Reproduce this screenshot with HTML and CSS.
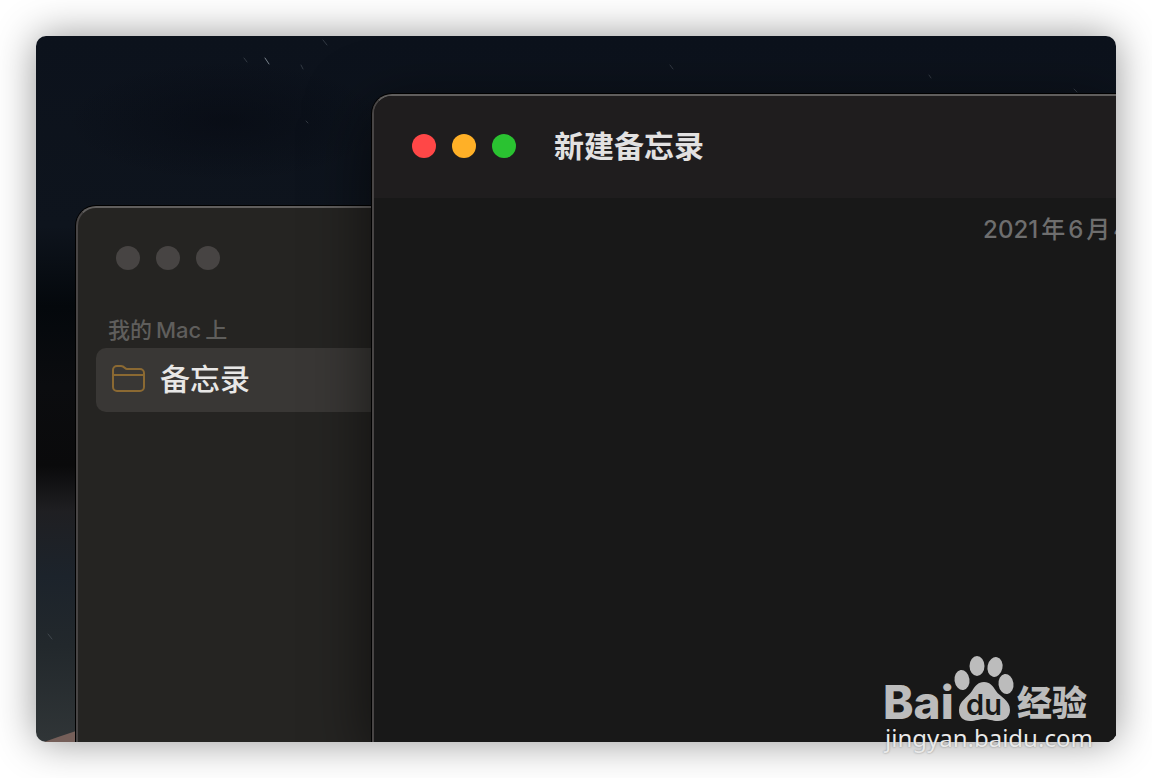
FILE: index.html
```
<!DOCTYPE html>
<html lang="zh-CN">

<head>
  <meta charset="UTF-8" />
  <meta name="viewport" content="width=device-width, initial-scale=1.0" />
  <title>新建备忘录</title>
  <link rel="stylesheet" href="styles.css">
</head>

<body>
  <main class="page">
    <div class="desktop">
      <!-- 星空壁纸 -->
      <svg class="stars" width="1080" height="706" fill="none" stroke="#7a838c" stroke-linecap="round" aria-hidden="true">
        <path d="M229 22l4 6" />
        <path d="M287 4l4 5M208 22l3 4M265 29l2 4M634 29l3 4M1038 53l3 3M893 39l2 3M270 85l2 2M12 598l4 5" opacity=".35" />
        <path d="M8 706L22 701L40 695V706Z" fill="#755f59" stroke="none" />
      </svg>

      <!-- 备忘录列表窗口 -->
      <section class="window window-list">
        <header class="list-header">
          <div class="lights inactive">
            <button type="button" aria-label="关闭"></button>
            <button type="button" aria-label="最小化"></button>
            <button type="button" aria-label="缩放"></button>
          </div>
        </header>
        <nav class="sidebar">
          <h2><span>我的</span><span>Mac</span><span>上</span></h2>
          <a class="folder" href="#">
            <svg width="34" height="28" viewBox="0 0 34 28" fill="none" stroke="#8b6932" stroke-width="2" stroke-linejoin="round" aria-hidden="true">
              <path d="M1 5a4 4 0 0 1 4-4h4c2 0 3 1 4 2s1 1 2 1h13a4 4 0 0 1 4 4v14a4 4 0 0 1-4 4H5a4 4 0 0 1-4-4zM1 10h31" />
            </svg>
            <span>备忘录</span>
          </a>
        </nav>
      </section>

      <!-- 新建备忘录窗口 -->
      <section class="window window-note">
        <header class="note-header">
          <div class="lights">
            <button class="close" type="button" aria-label="关闭"></button>
            <button class="minimize" type="button" aria-label="最小化"></button>
            <button class="zoom" type="button" aria-label="缩放"></button>
          </div>
          <h1>新建备忘录</h1>
        </header>
        <div class="note-body">
          <time datetime="2021-06-04"><span>2021</span><span>年</span><span>6</span><span>月</span><span>4</span><span>日</span></time>
        </div>
      </section>
    </div>

    <!-- 水印 -->
    <div class="watermark">
      <svg width="212" height="70" viewBox="0 0 212 70" fill="#bcbcbc">
        <text class="wm-bai" x="-1" y="67">Bai</text>
        <ellipse cx="78" cy="28" rx="7.5" ry="10" transform="rotate(-8 78 28)" />
        <ellipse cx="93" cy="14" rx="7.5" ry="10" />
        <ellipse cx="111" cy="15" rx="7.5" ry="10" transform="rotate(12 111 15)" />
        <ellipse cx="122" cy="32" rx="7.5" ry="10" transform="rotate(-8 122 32)" />
        <path d="M100 30C106 30 109 34 112 39C116 45 126 48 126 58C126 65 121 69 114 69C108 69 105 67 100 67C95 67 92 69 86 69C79 69 75 65 75 58C75 49 84 45 88 39C91 34 94 30 100 30Z" />
        <text class="wm-du" x="100" y="63">du</text>
        <text class="wm-jingyan" x="133" y="64">经验</text>
      </svg>
      <p>jingyan.baidu.com</p>
    </div>
  </main>
</body>

</html>
```
FILE: styles.css
```
* {
  box-sizing: border-box;
}

body {
  margin: 0;
  background: #fff;
  font-family: Inter, "Noto Sans CJK SC", sans-serif;
}

h1,
h2,
p {
  margin: 0;
}

.page {
  display: flex;
  position: relative;
  min-height: 100vh;
  padding: 36px;
  overflow: hidden;
}

.desktop {
  position: relative;
  flex: 1;
  overflow: hidden;
  border-radius: 10px;
  background:
    radial-gradient(ellipse 160px 60px at 190px 85px, rgba(5, 8, 16, 0.5), transparent),
    linear-gradient(#0c121c, #0e141d 190px, #04080c 270px, #0b0c0f 350px, #0a0a0b 430px, #1f1f22 475px, #1c232b 540px, #22282c 610px, #303537 706px);
  box-shadow: 0 0 40px rgba(0, 0, 0, 0.42);
}

.stars {
  display: block;
}

/* 窗口 */
.window {
  position: absolute;
  right: 0;
  bottom: 0;
  border: 2px solid #484545;
  border-top-color: #605e5d;
  border-right: none;
  border-bottom: none;
  border-top-left-radius: 20px;
}

.window-list {
  top: 170px;
  left: 40px;
  background: #252422;
  box-shadow: 0 0 0 1px #000;
}

.window-note {
  top: 58px;
  left: 336px;
  overflow: hidden;
  background: #181818;
  box-shadow: 0 0 0 1px #000, 0 16px 64px rgba(0, 0, 0, 0.6);
}

/* 红绿灯按钮 */
.lights {
  display: flex;
  gap: 16px;
}

.lights button {
  width: 24px;
  height: 24px;
  padding: 0;
  border: none;
  border-radius: 50%;
  cursor: pointer;
}

.lights .close {
  background: #ff4747;
}

.lights .minimize {
  background: #ffb027;
}

.lights .zoom {
  background: #2ac231;
}

.lights.inactive button {
  background: #474443;
}

/* 侧边栏 */
.list-header {
  padding: 38px 38px 40px;
}

.sidebar {
  padding-left: 18px;
}

.sidebar h2 {
  display: flex;
  gap: 4px;
  height: 38px;
  padding-left: 12px;
  color: #5f5e5c;
  font-size: 22px;
  font-weight: 500;
  line-height: 40px;
}

.folder {
  display: flex;
  align-items: center;
  gap: 14px;
  height: 64px;
  padding: 0 0 2px 16px;
  border-radius: 10px;
  background: #393735;
  color: #e8e7e6;
  font-size: 30px;
  font-weight: 500;
  line-height: 40px;
  text-decoration: none;
}

/* 备忘录内容 */
.note-header {
  display: flex;
  align-items: center;
  gap: 38px;
  height: 102px;
  padding: 0 0 2px 38px;
  background: #1f1d1e;
}

.note-header h1 {
  color: #e2e1e1;
  font-size: 30px;
  font-weight: 700;
  line-height: 40px;
}

.note-body {
  display: flex;
  justify-content: flex-end;
  padding-top: 16px;
}

.note-body time {
  display: flex;
  gap: 3px;
  margin-right: -40px;
  color: #6e6e6e;
  font-size: 24px;
  font-weight: 500;
  line-height: 32px;
}

/* 水印 */
.watermark {
  position: absolute;
  right: 56px;
  bottom: 24px;
  width: 212px;
}

.watermark svg {
  display: block;
  overflow: visible;
}

.watermark p {
  padding-left: 1px;
  color: #e9e9e9;
  font-family: "Noto Sans", sans-serif;
  font-size: 24px;
  line-height: 32px;
  text-shadow: 0 0 2px rgba(0, 0, 0, 0.4);
}

.wm-bai {
  font-size: 46px;
  font-weight: 800;
}

.wm-du {
  fill: #181818;
  font-size: 29px;
  font-weight: 600;
  text-anchor: middle;
}

.wm-jingyan {
  font-family: "Noto Sans CJK SC", sans-serif;
  font-size: 35px;
  font-weight: 900;
}
```
